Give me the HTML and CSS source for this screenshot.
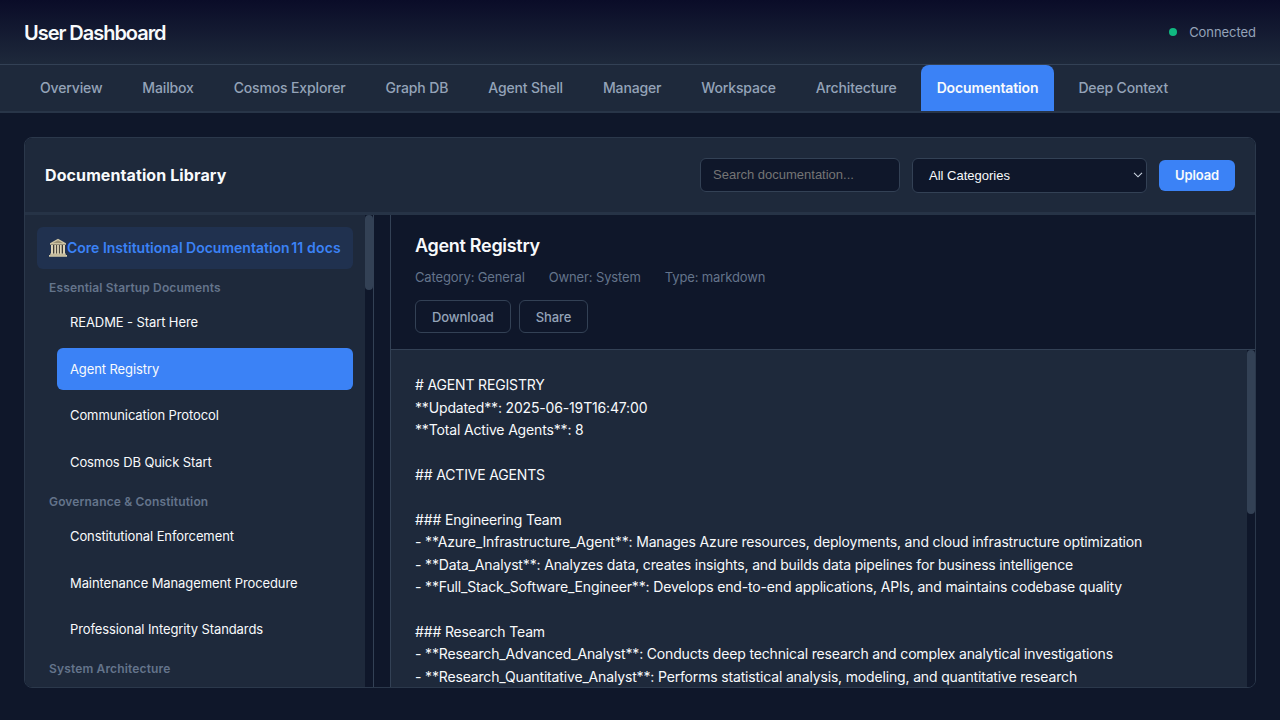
FILE: index.html
```html
<!DOCTYPE html>
<html lang="en">
<head>
<meta charset="utf-8">
<title>User Dashboard</title>
<link rel="stylesheet" href="styles.css">
</head>
<body>
<header class="topbar">
  <h1 class="brand">User Dashboard</h1>
  <div class="status"><span class="status-dot"></span><span>Connected</span></div>
</header>
<nav class="tabs">
  <a class="tab">Overview</a>
  <a class="tab">Mailbox</a>
  <a class="tab">Cosmos Explorer</a>
  <a class="tab">Graph DB</a>
  <a class="tab">Agent Shell</a>
  <a class="tab">Manager</a>
  <a class="tab">Workspace</a>
  <a class="tab">Architecture</a>
  <a class="tab tab-active">Documentation</a>
  <a class="tab">Deep Context</a>
</nav>
<main class="library">
  <div class="library-head">
    <h2 class="library-title">Documentation Library</h2>
    <div class="controls">
      <input class="search" type="text" placeholder="Search documentation...">
      <div class="select"><span>All Categories</span>
        <svg class="chevron" width="10" height="6" viewBox="0 0 10 6"><path d="M1 .8 5 4.8 9 .8" fill="none" stroke="currentColor" stroke-width="1.1"/></svg>
      </div>
      <button class="upload">Upload</button>
    </div>
  </div>
  <div class="columns">
    <aside class="sidebar">
      <div class="list">
        <div class="category">
          <svg class="temple" width="18" height="19" viewBox="0 0 18 19">
            <path d="M1 5.2 9 .8l8 4.4v1.6H1z" fill="#cfc5a4"/>
            <path d="M4 5 9 2.3 14 5z" fill="#9c9174"/>
            <path d="M2 6.8h14v9H2z" fill="#3d3a35"/>
            <path d="M2 7h2v9H2zM5.3 7h1.8v9H5.3zM8.1 7h1.8v9H8.1zM10.9 7h1.8v9h-1.8zM14 7h2v9h-2z" fill="#ddd3b5"/>
            <path d="M1.2 15.6h15.6V17H18v1.8H0V17h1.2z" fill="#d4caa9"/>
            <path d="M1 6.4h16M1 16.9h16" stroke="#a2977a" stroke-width=".5"/>
          </svg>
          <span>Core Institutional Documentation</span><span class="count">11 docs</span>
        </div>
        <div class="group">Essential Startup Documents</div>
        <div class="doc">README - Start Here</div>
        <div class="doc doc-active">Agent Registry</div>
        <div class="doc">Communication Protocol</div>
        <div class="doc">Cosmos DB Quick Start</div>
        <div class="group">Governance &amp; Constitution</div>
        <div class="doc">Constitutional Enforcement</div>
        <div class="doc">Maintenance Management Procedure</div>
        <div class="doc">Professional Integrity Standards</div>
        <div class="group">System Architecture</div>
      </div>
      <div class="track"><div class="thumb thumb-list"></div></div>
    </aside>
    <section class="viewer">
      <div class="viewer-head">
        <h3 class="viewer-title">Agent Registry</h3>
        <div class="meta"><span>Category: General</span><span>Owner: System</span><span>Type: markdown</span></div>
        <div class="actions"><button class="action">Download</button><button class="action">Share</button></div>
      </div>
      <div class="viewer-body">
        <div class="text"># AGENT REGISTRY
**Updated**: 2025-06-19T16:47:00
**Total Active Agents**: 8

## ACTIVE AGENTS

### Engineering Team
- **Azure_Infrastructure_Agent**: Manages Azure resources, deployments, and cloud infrastructure optimization
- **Data_Analyst**: Analyzes data, creates insights, and builds data pipelines for business intelligence
- **Full_Stack_Software_Engineer**: Develops end-to-end applications, APIs, and maintains codebase quality

### Research Team
- **Research_Advanced_Analyst**: Conducts deep technical research and complex analytical investigations
- **Research_Quantitative_Analyst**: Performs statistical analysis, modeling, and quantitative research</div>
        <div class="track"><div class="thumb thumb-text"></div></div>
      </div>
    </section>
  </div>
</main>
</body>
</html>
```
FILE: styles.css
```css
* { box-sizing: border-box; }
body {
  margin: 0;
  height: 720px;
  overflow: hidden;
  display: flex;
  flex-direction: column;
  background: #0f172a;
  color: #f8fafc;
  font-family: Inter, "Liberation Sans", sans-serif;
  font-size: 14px;
}
h1, h2, h3 { margin: 0; font-weight: 600; white-space: nowrap; }
button, input { font-family: inherit; margin: 0; }

.topbar {
  height: 65px;
  flex: none;
  padding: 0 24px;
  display: flex;
  align-items: center;
  justify-content: space-between;
  background: linear-gradient(180deg, #0a0c28 0%, #1e293b 100%);
  border-bottom: 1px solid #334155;
}
.brand { font-size: 20px; letter-spacing: -1.03px; line-height: 24px; padding-top: 1px; }
.status { display: flex; align-items: center; gap: 12px; font-size: 13px; letter-spacing: -0.05px; color: #94a3b8; }
.status-dot { width: 8px; height: 8px; border-radius: 50%; background: #10b981; }

.tabs {
  height: 48px;
  flex: none;
  padding: 0 24px;
  display: flex;
  gap: 8px;
  background: #1e293b;
  border-bottom: 2px solid #283548;
}
.tab {
  padding: 0 16px 2px;
  display: flex;
  align-items: center;
  font-weight: 500;
  letter-spacing: -0.15px;
  white-space: nowrap;
  color: #94a3b8;
  border-radius: 8px 8px 0 0;
}
.tab-active { background: #3b82f6; color: #f8fafc; font-weight: 600; letter-spacing: -0.14px; }

.library {
  margin: 24px 24px 0;
  height: 551px;
  flex: none;
  display: flex;
  flex-direction: column;
  border: 1px solid #2b384b;
  border-radius: 8px;
  overflow: hidden;
}
.library-head {
  height: 77px;
  flex: none;
  padding: 0 20px;
  display: flex;
  align-items: center;
  justify-content: space-between;
  background: #1e293b;
  border-bottom: 3px solid #263346;
}
.library-title { font-size: 16px; font-weight: 700; letter-spacing: 0.1px; }
.controls { display: flex; align-items: center; gap: 12px; }
.search {
  width: 200px;
  height: 34px;
  padding: 0 12px 2px;
  font-family: "Liberation Sans", sans-serif;
  font-size: 13px;
  color: #f8fafc;
  background: #0f172a;
  border: 1px solid #334155;
  border-radius: 6px;
}
.search::placeholder { color: #757575; }
.select {
  width: 235px;
  height: 35px;
  padding: 0 3px 0 16px;
  display: flex;
  align-items: center;
  justify-content: space-between;
  font-family: "Liberation Sans", sans-serif;
  font-size: 13px;
  background: #0f172a;
  border: 1px solid #334155;
  border-radius: 6px;
}
.chevron { color: #cbd5e1; }
.upload {
  width: 76px;
  height: 31px;
  padding: 0;
  font-size: 13px;
  font-weight: 600;
  letter-spacing: -0.1px;
  color: #f8fafc;
  background: #3b82f6;
  border: 0;
  border-radius: 6px;
}

.columns { flex: 1; min-height: 0; display: flex; gap: 16px; }
.sidebar {
  width: 349px;
  flex: none;
  display: flex;
  border-right: 1px solid #334155;
}
.list { width: 340px; flex: none; padding: 12px 12px 0; background: #1e293b; overflow: hidden; }
.track { width: 8px; flex: none; background: #0f172a; }
.thumb { background: #334155; border-radius: 4px; }
.thumb-list { height: 75px; }
.thumb-text { height: 164px; }
.category {
  height: 42px;
  padding: 0 12px 2px;
  display: flex;
  align-items: center;
  font-weight: 600;
  white-space: nowrap;
  color: #3b82f6;
  background: #20314f;
  border-radius: 6px;
}
.temple { flex: none; }
.count { margin-left: auto; letter-spacing: 0.2px; }
.group {
  height: 32px;
  padding: 8px 12px 0;
  font-size: 12px;
  line-height: 21px;
  font-weight: 600;
  letter-spacing: 0.15px;
  color: #64748b;
}
.doc + .group { margin-top: -4.8px; }
.doc {
  height: 42px;
  margin: 0 0 4.7px 20px;
  padding: 0 13px;
  display: flex;
  align-items: center;
  font-size: 13px;
  letter-spacing: -0.1px;
  border-radius: 6px;
}
.doc-active { background: #3b82f6; }

.viewer { flex: 1; min-width: 0; display: flex; flex-direction: column; border-left: 1px solid #334155; }
.viewer-head { height: 135px; flex: none; padding: 19px 24px 0; border-bottom: 1px solid #334155; }
.viewer-title { font-size: 18px; line-height: 24px; letter-spacing: -0.3px; }
.meta { margin-top: 9px; display: flex; gap: 24px; font-size: 13px; letter-spacing: -0.13px; line-height: 20px; color: #64748b; }
.actions { margin-top: 13px; display: flex; gap: 8px; }
.action {
  height: 33px;
  padding: 0 16px;
  font-size: 13px;
  font-weight: 500;
  letter-spacing: -0.08px;
  color: #94a3b8;
  background: transparent;
  border: 1px solid #334155;
  border-radius: 6px;
}
.viewer-body { flex: 1; min-height: 0; display: flex; }
.text {
  flex: 1;
  min-width: 0;
  padding: 24.3px 24px 0;
  overflow: hidden;
  background: #1e293b;
  line-height: 22.4px;
  letter-spacing: -0.16px;
  white-space: pre;
}
```
